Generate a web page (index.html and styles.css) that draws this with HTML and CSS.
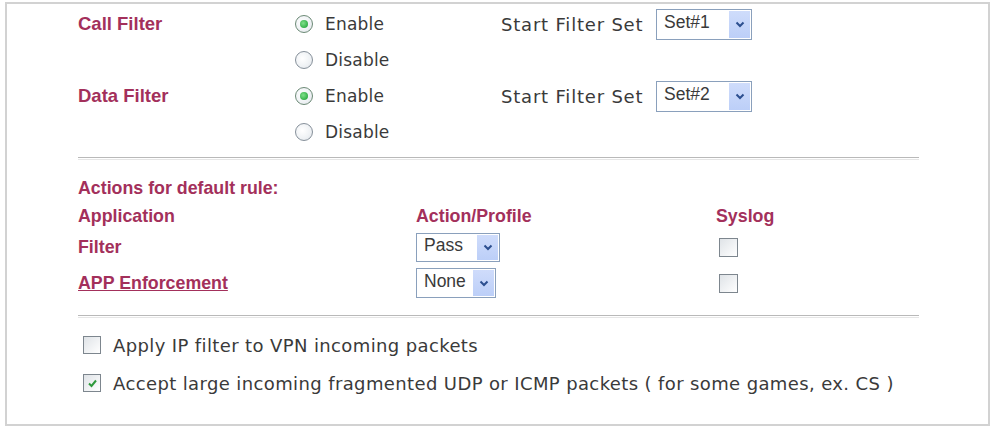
FILE: index.html
```html
<!DOCTYPE html>
<html>
<head>
<meta charset="utf-8">
<link rel="stylesheet" href="styles.css">
</head>
<body>
<div class="frame">
  <div class="top">
    <div class="lbl">Call Filter</div>
    <div class="opt"><span class="radio on"></span><span class="otext">Enable</span></div>
    <div class="sfs">Start Filter Set</div>
    <div><span class="sel w96"><span class="stext">Set#1</span><span class="sbtn"><svg width="10" height="7" viewBox="0 0 10 7"><path d="M1.5 1.5 L5 5 L8.5 1.5" fill="none" stroke="#2c4f8f" stroke-width="2"/></svg></span></span></div>

    <div></div>
    <div class="opt"><span class="radio"></span><span class="otext">Disable</span></div>
    <div></div>
    <div></div>

    <div class="lbl">Data Filter</div>
    <div class="opt"><span class="radio on"></span><span class="otext">Enable</span></div>
    <div class="sfs">Start Filter Set</div>
    <div><span class="sel w96"><span class="stext">Set#2</span><span class="sbtn"><svg width="10" height="7" viewBox="0 0 10 7"><path d="M1.5 1.5 L5 5 L8.5 1.5" fill="none" stroke="#2c4f8f" stroke-width="2"/></svg></span></span></div>

    <div></div>
    <div class="opt"><span class="radio"></span><span class="otext">Disable</span></div>
    <div></div>
    <div></div>
  </div>

  <div class="rule rule1"></div>

  <div class="mid">
    <div class="lbl span3">Actions for default rule:</div>

    <div class="lbl">Application</div>
    <div class="lbl">Action/Profile</div>
    <div class="lbl">Syslog</div>

    <div class="lbl">Filter</div>
    <div><span class="sel w84"><span class="stext">Pass</span><span class="sbtn"><svg width="10" height="7" viewBox="0 0 10 7"><path d="M1.5 1.5 L5 5 L8.5 1.5" fill="none" stroke="#2c4f8f" stroke-width="2"/></svg></span></span></div>
    <div><span class="cb sys"></span></div>

    <div class="lbl"><a class="link">APP Enforcement</a></div>
    <div><span class="sel w80"><span class="stext">None</span><span class="sbtn"><svg width="10" height="7" viewBox="0 0 10 7"><path d="M1.5 1.5 L5 5 L8.5 1.5" fill="none" stroke="#2c4f8f" stroke-width="2"/></svg></span></span></div>
    <div><span class="cb sys"></span></div>
  </div>

  <div class="rule rule2"></div>

  <div class="bottom">
    <div class="crow"><span class="cb"></span><span class="ctext">Apply IP filter to VPN incoming packets</span></div>
    <div class="crow"><span class="cb"><svg width="13" height="13" viewBox="0 0 13 13"><path d="M3 6.5 L5.5 9 L10 3.5" fill="none" stroke="#2f9a3c" stroke-width="2"/></svg></span><span class="ctext">Accept large incoming fragmented UDP or ICMP packets ( for some games, ex. CS )</span></div>
  </div>
</div>
</body>
</html>
```

FILE: styles.css
```css
html, body {
  margin: 0;
  padding: 0;
  background: #ffffff;
}

.frame {
  box-sizing: border-box;
  margin: 2px 3px 0 5px;
  height: 424px;
  border: 2px solid #d2d2d2;
  background: #ffffff;
}

.lbl {
  font-family: "Liberation Sans", Arial, sans-serif;
  font-weight: bold;
  font-size: 17.8px;
  color: #a3305b;
  white-space: nowrap;
}

.link {
  color: #a3305b;
  text-decoration: underline;
}

.top {
  display: grid;
  grid-template-columns: 217px 206px 155px 1fr;
  grid-auto-rows: 36px;
  align-items: center;
  padding: 2px 0 0 71px;
}

.top .lbl {
  font-size: 18.5px;
}

.opt {
  display: flex;
  align-items: center;
  gap: 12px;
}

.otext, .sfs, .ctext {
  font-family: "DejaVu Sans", Verdana, sans-serif;
  font-size: 17px;
  color: #3a3a3a;
  white-space: nowrap;
}

.otext {
  letter-spacing: 0.2px;
}

.sfs {
  font-size: 18px;
  letter-spacing: 0.8px;
}

.radio {
  box-sizing: border-box;
  width: 18px;
  height: 18px;
  border-radius: 50%;
  border: 1.5px solid #86909a;
  background: radial-gradient(circle at 40% 40%, #ffffff 0%, #eef1f4 60%, #d9dee3 100%);
  display: flex;
  align-items: center;
  justify-content: center;
}

.radio.on {
  border-color: #6c8a76;
}

.radio.on::after {
  content: "";
  width: 8px;
  height: 8px;
  border-radius: 50%;
  background: radial-gradient(circle at 40% 40%, #7fe08a 0%, #35b04a 70%, #238a35 100%);
}

.sel {
  box-sizing: border-box;
  display: inline-flex;
  align-items: stretch;
  height: 31px;
  border: 1px solid #8aa0bc;
  background: #ffffff;
  padding: 1px;
  vertical-align: middle;
}

.w96 { width: 96px; }
.w84 { width: 84px; height: 29px; }
.w80 { width: 80px; height: 30px; }

.stext {
  flex: 1;
  font-family: "Liberation Sans", Arial, sans-serif;
  font-size: 17.5px;
  color: #3a3a3a;
  padding-left: 6px;
  display: flex;
  align-items: center;
  margin-top: -3px;
}

.sbtn {
  width: 21px;
  background: linear-gradient(#cfdcfb, #bccff8);
  display: flex;
  align-items: center;
  justify-content: center;
}

.mid {
  display: grid;
  grid-template-columns: 338px 300px 1fr;
  grid-template-rows: 28px 28px 34px 38px;
  align-items: center;
  padding: 14px 0 0 71px;
}

.span3 {
  grid-column: 1 / 4;
}

.cb {
  box-sizing: border-box;
  display: inline-flex;
  align-items: center;
  justify-content: center;
  width: 18px;
  height: 18px;
  border: 1.5px solid #7d868e;
  background: linear-gradient(135deg, #dfe3e7, #ffffff);
  vertical-align: middle;
}

.sys {
  width: 19px;
  height: 19px;
  margin-left: 3px;
}

.rule {
  margin-left: 71px;
  width: 841px;
  height: 1px;
  border-top: 1px solid #b9b9b9;
  border-bottom: 1px solid #e6e6e6;
}

.rule1 {
  margin-top: 7px;
}

.rule2 {
  margin-top: 13px;
}

.bottom {
  padding: 8px 0 0 76px;
}

.crow {
  display: flex;
  align-items: center;
  gap: 12px;
  height: 38px;
}

.ctext {
  font-size: 18px;
  letter-spacing: 0.38px;
}
```
